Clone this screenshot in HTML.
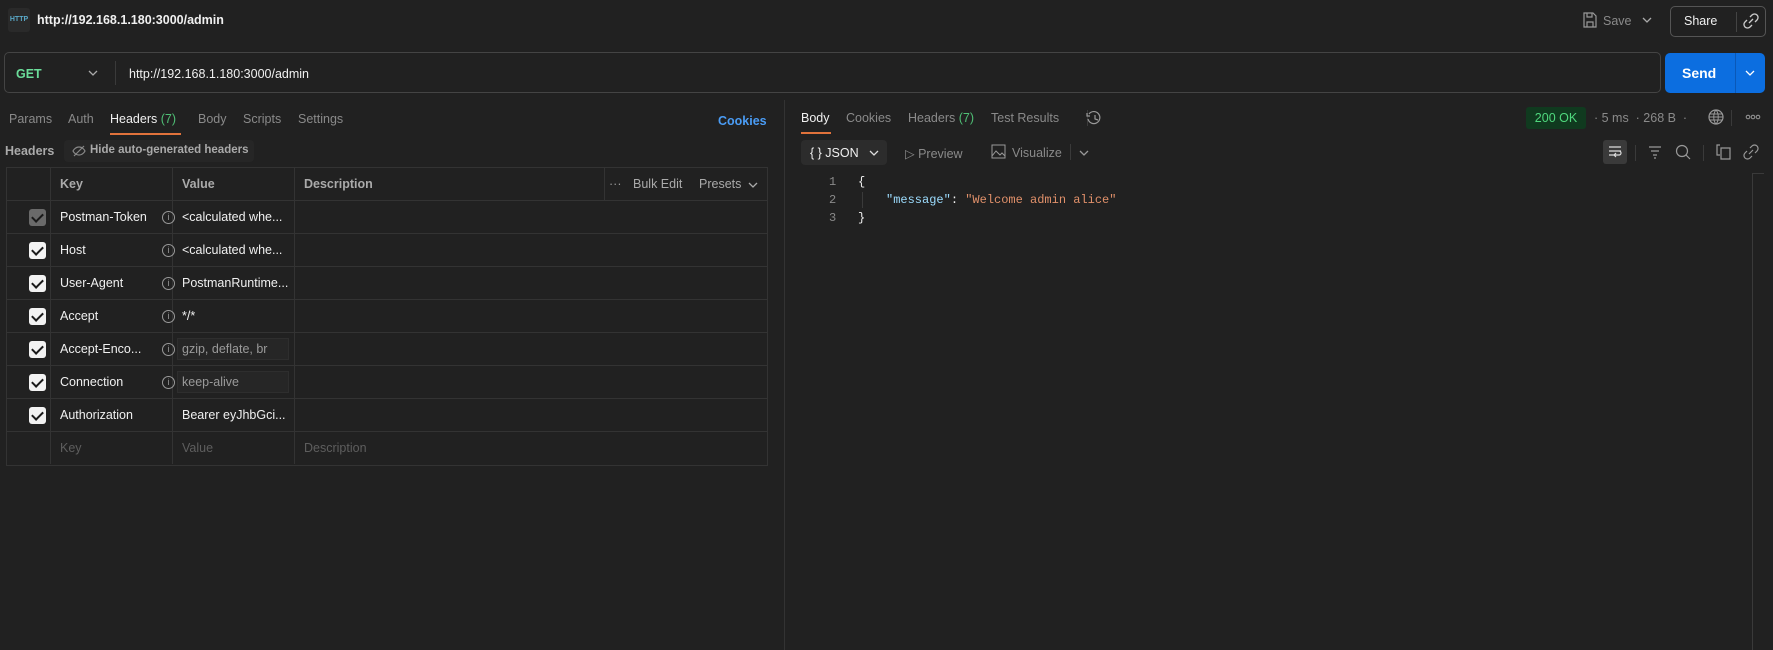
<!DOCTYPE html>
<html><head><meta charset="utf-8"><style>
*{box-sizing:border-box;margin:0;padding:0}
body{width:1773px;height:650px;background:#212121;font-family:"Liberation Sans",sans-serif;font-size:12.5px;color:#c8c8c8;position:relative;overflow:hidden}
.a{position:absolute;white-space:nowrap}
.w{color:#f0f0f0}
.g{color:#8a8a8a}
.tbl{position:absolute;left:6px;top:167px;width:762px;border:1px solid #333}
.row{height:33px;border-bottom:1px solid #333;position:relative}
.row:last-child{border-bottom:none}
.row div{position:absolute;top:0;height:32px;line-height:32px}
.c0{left:0;width:44px;border-right:1px solid #333}
.c1{left:44px;width:122px;border-right:1px solid #333;padding-left:9px}
.c2{left:166px;width:122px;border-right:1px solid #333;padding-left:9px}
.cb{position:absolute;left:22px;top:8px;width:17px;height:17px;background:#f2f2f2;border-radius:3px}
.cb.d{background:#6a6a6a}
.cb:after{content:"";position:absolute;left:5px;top:2px;width:5px;height:9px;border:solid #1a1a1a;border-width:0 2px 2px 0;transform:rotate(45deg)}
.info{position:absolute;left:111px;top:10px;width:13px;height:13px;border:1px solid #999;border-radius:50%;font-size:9px;line-height:11px;text-align:center;color:#999}
.ph{display:inline-block;background:#262626;border:1px solid #2e2e2e;height:22px;line-height:20px;padding:0 4px;margin-left:-5px;color:#9a9a9a;width:112px}
.mono{font-family:"Liberation Mono",monospace;font-size:12px}
.hd{font-weight:bold;color:#aaa}
</style></head><body>
<!-- title -->
<div class="a" style="left:8px;top:8px;width:22px;height:24px;background:#2a2a2a;border-radius:3px;color:#5aa9c8;font-size:7px;line-height:24px;text-align:center;font-weight:bold">HTTP</div>
<div class="a w" style="left:37px;top:13px;font-weight:bold;font-size:12.5px">http://192.168.1.180:3000/admin</div>
<svg class="a" style="left:1582px;top:12px" width="15" height="16" viewBox="0 0 15 16"><path d="M2 1h9l3 3v11H2z M5 1v4h5V1 M5 15v-5h6v5" fill="none" stroke="#999" stroke-width="1.2"/></svg>
<div class="a g" style="left:1603px;top:14px">Save</div>
<svg class="a" style="left:1642px;top:16px" width="10" height="8" viewBox="0 0 10 8"><path d="M1 2l4 4 4-4" fill="none" stroke="#aaa" stroke-width="1.3"/></svg>
<div class="a" style="left:1670px;top:6px;width:96px;height:31px;border:1px solid #555;border-radius:5px"></div>
<div class="a w" style="left:1684px;top:14px">Share</div>
<div class="a" style="left:1736px;top:12px;width:1px;height:20px;background:#444"></div>
<svg class="a" style="left:1743px;top:13px" width="16" height="16" viewBox="0 0 16 16"><path d="M6 10l4-4 M7 4l2-2a3 3 0 0 1 5 5l-2 2 M9 12l-2 2a3 3 0 0 1-5-5l2-2" fill="none" stroke="#ccc" stroke-width="1.3"/></svg>
<!-- url bar -->
<div class="a" style="left:4px;top:52px;width:1657px;height:41px;border:1px solid #444;border-radius:5px"></div>
<div class="a" style="left:16px;top:67px;color:#6bdd9a;font-weight:bold">GET</div>
<svg class="a" style="left:88px;top:69px" width="10" height="8" viewBox="0 0 10 8"><path d="M1 2l4 4 4-4" fill="none" stroke="#aaa" stroke-width="1.3"/></svg>
<div class="a" style="left:115px;top:61px;width:1px;height:24px;background:#3a3a3a"></div>
<div class="a w" style="left:129px;top:67px">http://192.168.1.180:3000/admin</div>
<div class="a" style="left:1665px;top:53px;width:100px;height:40px;background:#0c6ee0;border-radius:5px"></div>
<div class="a" style="left:1735px;top:53px;width:1px;height:40px;background:#0a58b8"></div>
<div class="a" style="left:1682px;top:65px;color:#fff;font-weight:bold;font-size:14px">Send</div>
<svg class="a" style="left:1745px;top:69px" width="10" height="8" viewBox="0 0 10 8"><path d="M1 2l4 4 4-4" fill="none" stroke="#fff" stroke-width="1.3"/></svg>
<!-- left tabs -->
<div class="a g" style="left:9px;top:112px">Params</div>
<div class="a g" style="left:68px;top:112px">Auth</div>
<div class="a w" style="left:110px;top:112px">Headers <span style="color:#4fbf75">(7)</span></div>
<div class="a" style="left:110px;top:133px;width:71px;height:2px;background:#e0723b"></div>
<div class="a g" style="left:198px;top:112px">Body</div>
<div class="a g" style="left:243px;top:112px">Scripts</div>
<div class="a g" style="left:298px;top:112px">Settings</div>
<div class="a" style="left:718px;top:114px;color:#4a9cf5;font-weight:bold">Cookies</div>
<div class="a hd" style="left:5px;top:144px">Headers</div>
<div class="a" style="left:64px;top:140px;width:190px;height:22px;background:#262626;border-radius:4px"></div>
<svg class="a" style="left:72px;top:144px" width="14" height="14" viewBox="0 0 14 14"><path d="M1 7s2-4 6-4 6 4 6 4-2 4-6 4-6-4-6-4z M2 12l10-10" fill="none" stroke="#888" stroke-width="1.2"/></svg>
<div class="a" style="left:90px;top:144px;font-size:11.5px;color:#aaa;font-weight:bold">Hide auto-generated headers</div>
<!-- table -->
<div class="tbl">
<div class="row"><div class="c0"></div><div class="c1 hd">Key</div><div class="c2 hd">Value</div><div class="hd" style="left:288px;width:310px;border-right:1px solid #333;padding-left:9px">Description</div><div style="left:602px;color:#999">&#183;&#183;&#183;</div><div style="left:626px;color:#aaa">Bulk Edit</div><div style="left:692px;color:#aaa">Presets</div><svg style="position:absolute;left:741px;top:13px" width="10" height="8" viewBox="0 0 10 8"><path d="M1 2l4 4 4-4" fill="none" stroke="#aaa" stroke-width="1.3"/></svg></div>
<div class="row"><div class="c0"><span class="cb d"></span></div><div class="c1 w">Postman-Token<span class="info">i</span></div><div class="c2 w">&lt;calculated whe...</div></div>
<div class="row"><div class="c0"><span class="cb"></span></div><div class="c1 w">Host<span class="info">i</span></div><div class="c2 w">&lt;calculated whe...</div></div>
<div class="row"><div class="c0"><span class="cb"></span></div><div class="c1 w">User-Agent<span class="info">i</span></div><div class="c2 w">PostmanRuntime...</div></div>
<div class="row"><div class="c0"><span class="cb"></span></div><div class="c1 w">Accept<span class="info">i</span></div><div class="c2 w">*/*</div></div>
<div class="row"><div class="c0"><span class="cb"></span></div><div class="c1 w">Accept-Enco...<span class="info">i</span></div><div class="c2"><span class="ph">gzip, deflate, br</span></div></div>
<div class="row"><div class="c0"><span class="cb"></span></div><div class="c1 w">Connection<span class="info">i</span></div><div class="c2"><span class="ph">keep-alive</span></div></div>
<div class="row"><div class="c0"><span class="cb"></span></div><div class="c1 w">Authorization</div><div class="c2 w">Bearer eyJhbGci...</div></div>
<div class="row"><div class="c0"></div><div class="c1" style="color:#5e5e5e">Key</div><div class="c2" style="color:#5e5e5e">Value</div><div style="left:288px;padding-left:9px;color:#5e5e5e">Description</div></div>
</div>
<!-- divider -->
<div class="a" style="left:784px;top:100px;width:1px;height:550px;background:#333"></div>
<!-- right -->
<div class="a w" style="left:801px;top:111px">Body</div>
<div class="a" style="left:801px;top:132px;width:30px;height:2px;background:#e0723b"></div>
<div class="a g" style="left:846px;top:111px">Cookies</div>
<div class="a g" style="left:908px;top:111px">Headers <span style="color:#4fbf75">(7)</span></div>
<div class="a g" style="left:991px;top:111px">Test Results</div>
<div class="a" style="left:1087px;top:110px;width:1px;height:16px;background:#3a3a3a"></div>
<svg class="a" style="left:1085px;top:109px" width="18" height="18" viewBox="0 0 18 18"><path d="M4 5a6 6 0 1 1-1 5 M2 4v3h3 M10 6v4l3 1" fill="none" stroke="#999" stroke-width="1.2"/></svg>
<div class="a" style="left:1526px;top:107px;width:60px;height:22px;background:#103a1f;border-radius:3px;color:#4fd87d;text-align:center;line-height:22px">200 OK</div>
<div class="a g" style="left:1594px;top:111px">&#183;&nbsp;5 ms&nbsp;&nbsp;&#183;&nbsp;268 B&nbsp;&nbsp;&#183;</div>
<svg class="a" style="left:1707px;top:108px" width="18" height="18" viewBox="0 0 18 18"><circle cx="9" cy="9" r="7" fill="none" stroke="#999" stroke-width="1.2"/><path d="M2 9h14 M9 2c-3 3-3 11 0 14 M9 2c3 3 3 11 0 14 M3 6h12 M3 12h12" fill="none" stroke="#999" stroke-width="1"/></svg>
<div class="a" style="left:1731px;top:110px;width:1px;height:16px;background:#3a3a3a"></div>
<svg class="a" style="left:1745px;top:114px" width="16" height="6" viewBox="0 0 16 6"><circle cx="3" cy="3" r="1.8" fill="none" stroke="#999"/><circle cx="8" cy="3" r="1.8" fill="none" stroke="#999"/><circle cx="13" cy="3" r="1.8" fill="none" stroke="#999"/></svg>
<div class="a" style="left:801px;top:140px;width:86px;height:25px;background:#2c2c2c;border-radius:4px"></div>
<div class="a w" style="left:810px;top:146px">{ } JSON</div>
<svg class="a" style="left:869px;top:149px" width="10" height="8" viewBox="0 0 10 8"><path d="M1 2l4 4 4-4" fill="none" stroke="#ddd" stroke-width="1.3"/></svg>
<div class="a g" style="left:905px;top:146px">&#9655; Preview</div>
<svg class="a" style="left:991px;top:144px" width="15" height="15" viewBox="0 0 15 15"><rect x="1" y="1" width="13" height="13" fill="none" stroke="#999"/><path d="M1 12l4-5 4 4 2-2 3 3" fill="none" stroke="#999"/></svg>
<div class="a g" style="left:1012px;top:146px">Visualize</div>
<div class="a" style="left:1070px;top:144px;width:1px;height:16px;background:#3a3a3a"></div>
<svg class="a" style="left:1079px;top:149px" width="10" height="8" viewBox="0 0 10 8"><path d="M1 2l4 4 4-4" fill="none" stroke="#999" stroke-width="1.3"/></svg>
<div class="a" style="left:1603px;top:140px;width:24px;height:24px;background:#3a3a3a;border-radius:3px"></div>
<svg class="a" style="left:1607px;top:144px" width="16" height="16" viewBox="0 0 16 16"><path d="M2 3h12 M2 7h12 M2 11h5 M9 13l-2-2 2-2 M7 11h5a2 2 0 0 0 0-4" fill="none" stroke="#ddd" stroke-width="1.2"/></svg>
<div class="a" style="left:1635px;top:145px;width:1px;height:16px;background:#3a3a3a"></div>
<svg class="a" style="left:1647px;top:144px" width="16" height="16" viewBox="0 0 16 16"><path d="M2 3h12 M4 7h8 M6 11h4 M7 14h2" stroke="#999" stroke-width="1.2"/></svg>
<svg class="a" style="left:1675px;top:144px" width="16" height="16" viewBox="0 0 16 16"><circle cx="7" cy="7" r="5.5" fill="none" stroke="#999" stroke-width="1.2"/><path d="M11 11l4 4" stroke="#999" stroke-width="1.2"/></svg>
<div class="a" style="left:1703px;top:145px;width:1px;height:16px;background:#3a3a3a"></div>
<svg class="a" style="left:1716px;top:144px" width="16" height="16" viewBox="0 0 16 16"><path d="M4 1h-3v10h3 M5 4h9v11h-9z" fill="none" stroke="#999" stroke-width="1.2"/></svg>
<svg class="a" style="left:1743px;top:144px" width="16" height="16" viewBox="0 0 16 16"><path d="M6 10l4-4 M7 4l2-2a3 3 0 0 1 5 5l-2 2 M9 12l-2 2a3 3 0 0 1-5-5l2-2" fill="none" stroke="#999" stroke-width="1.2"/></svg>
<div class="a" style="left:1752px;top:173px;width:1px;height:477px;background:#3a3a3a"></div>
<div class="a" style="left:1752px;top:173px;width:12px;height:1px;background:#3a3a3a"></div>
<div class="a mono g" style="left:829px;top:175px">1</div>
<div class="a mono g" style="left:829px;top:193px">2</div>
<div class="a mono g" style="left:829px;top:211px">3</div>
<div class="a mono w" style="left:858px;top:175px">{</div>
<div class="a" style="left:862px;top:192px;width:1px;height:16px;background:#3a3a3a"></div>
<div class="a mono" style="left:886px;top:193px"><span style="color:#9cdcfe">"message"</span><span class="w">: </span><span style="color:#e0906a">"Welcome admin alice"</span></div>
<div class="a mono w" style="left:858px;top:211px">}</div>
</body></html>
